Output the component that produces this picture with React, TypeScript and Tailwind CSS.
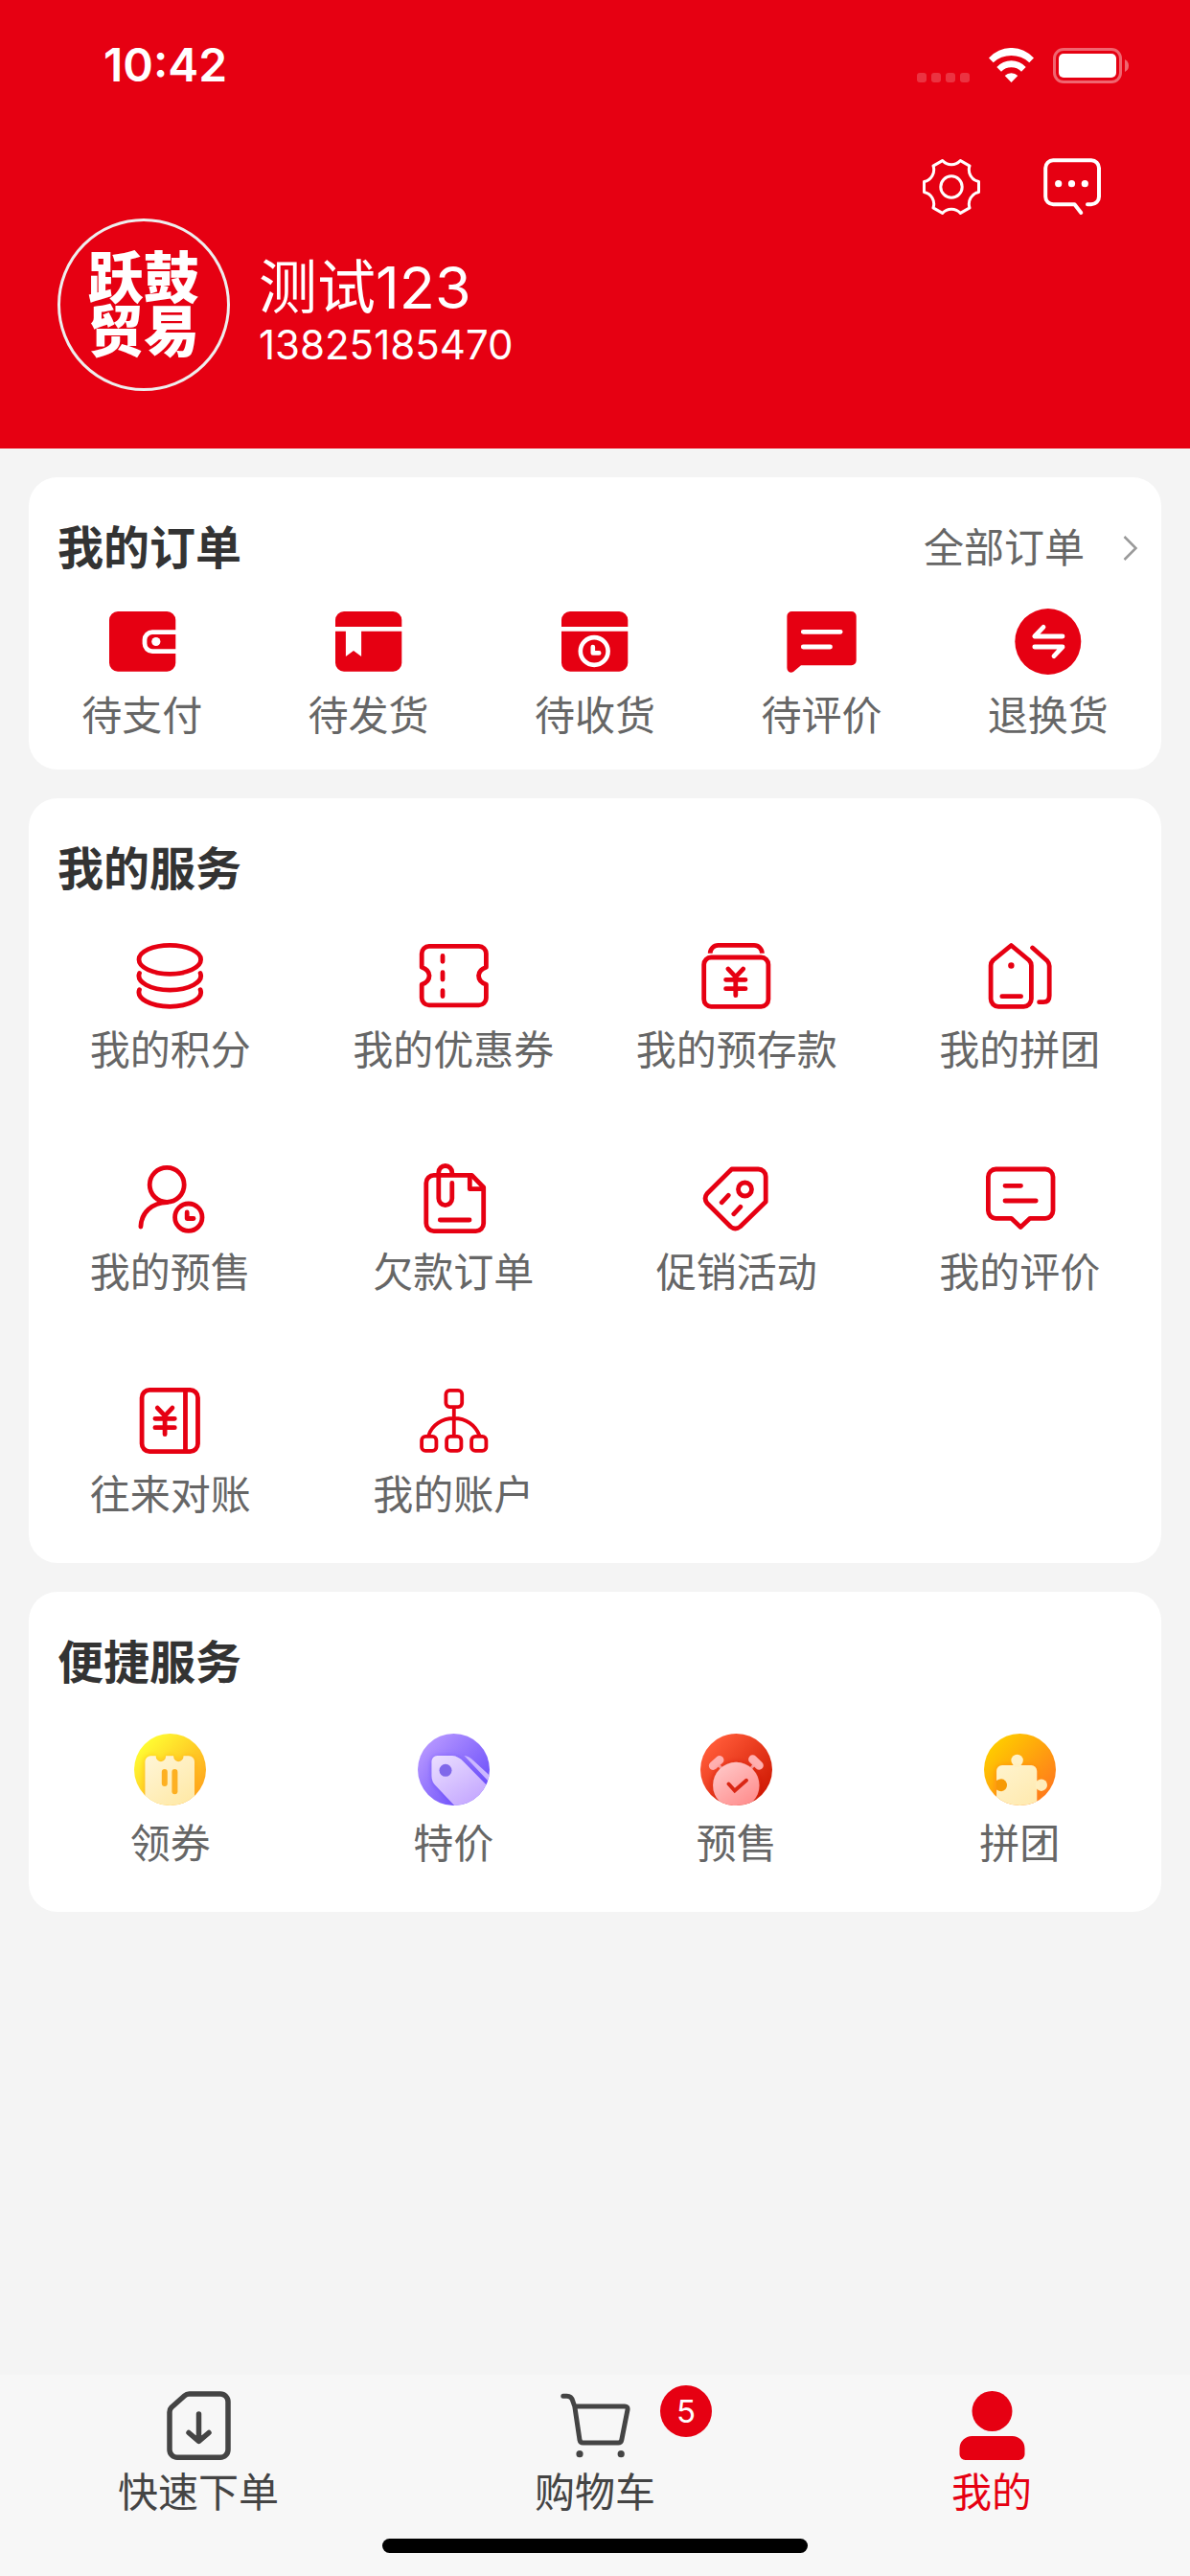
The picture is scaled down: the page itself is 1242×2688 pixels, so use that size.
import React from 'react';

const RED = '#e60012';

interface Entry {
    label: string;
    icon: React.ReactNode;
}

/* ---------- icon wrappers ---------- */

const SolidIcon: React.FC<{ children: React.ReactNode }> = ({ children }) => (
    <svg className="w-[75px] h-[75px]" viewBox="0 0 75 75" fill={RED} aria-hidden="true">
        {children}
    </svg>
);

const LineIcon: React.FC<{ children: React.ReactNode; width?: number; color?: string }> = ({
    children,
    width = 4.8,
    color = RED,
}) => (
    <svg
        className="w-[75px] h-[75px]"
        viewBox="0 0 75 75"
        fill="none"
        stroke={color}
        strokeWidth={width}
        strokeLinecap="round"
        strokeLinejoin="round"
        aria-hidden="true"
    >
        {children}
    </svg>
);

const Yuan: React.FC<{ x: number; y: number }> = ({ x, y }) => (
    <g transform={`translate(${x} ${y})`}>
        <path d="M-7.8 -10.6L0 -2.4L7.8 -10.6M0 -2.4V17M-10.2 0.6H10.2M-10.2 10H10.2" />
    </g>
);

/* ---------- data ---------- */

const orders: Entry[] = [
    {
        label: '待支付',
        icon: (
            <SolidIcon>
                <rect x="3" y="6" width="69.3" height="62.7" rx="9" />
                <path d="M73 27.6H48a8 8 0 0 0-8 8v4a8 8 0 0 0 8 8H73" fill="none" stroke="#fff" strokeWidth="4.8" />
                <circle cx="51.8" cy="37.5" r="4.6" fill="#fff" />
            </SolidIcon>
        ),
    },
    {
        label: '待发货',
        icon: (
            <SolidIcon>
                <rect x="3" y="6" width="69.3" height="62.7" rx="9" />
                <path d="M2 22H74V26.7H30.1V53L22 47L13.9 53V26.7H2Z" fill="#fff" />
            </SolidIcon>
        ),
    },
    {
        label: '待收货',
        icon: (
            <SolidIcon>
                <rect x="3" y="6" width="69.3" height="62.7" rx="9" />
                <path d="M2 22H74V26.7H2Z" fill="#fff" />
                <g fill="none" stroke="#fff" strokeWidth="4.6" strokeLinecap="round" strokeLinejoin="round">
                    <circle cx="37.2" cy="47.5" r="14.4" />
                    <path d="M35.8 43V49.4H42.2" />
                </g>
            </SolidIcon>
        ),
    },
    {
        label: '待评价',
        icon: (
            <SolidIcon>
                <path d="M6.4 6H68.7a5 5 0 0 1 5 5V57.3a5 5 0 0 1-5 5H16L8 69Q5.6 70.6 3.2 69Q1.4 67.6 1.4 65V11a5 5 0 0 1 5-5Z" />
                <path d="M18.3 27.3H57.2M18.3 43H46.5" stroke="#fff" strokeWidth="4.8" strokeLinecap="round" />
            </SolidIcon>
        ),
    },
    {
        label: '退换货',
        icon: (
            <SolidIcon>
                <circle cx="37.8" cy="37.5" r="34.5" />
                <path
                    d="M33 22.3L23.8 32H53M23.8 43H53L44 52.7"
                    fill="none"
                    stroke="#fff"
                    strokeWidth="4.8"
                    strokeLinecap="round"
                    strokeLinejoin="round"
                />
            </SolidIcon>
        ),
    },
];

const services: Entry[] = [
    {
        label: '我的积分',
        icon: (
            <LineIcon>
                <ellipse cx="37.3" cy="20.3" rx="32.3" ry="15" />
                <path d="M5.5 34.5A32.3 15 0 1 0 69.1 34.5M5.5 51.7A32.3 15 0 1 0 69.1 51.7" />
            </LineIcon>
        ),
    },
    {
        label: '我的优惠券',
        icon: (
            <LineIcon>
                <path
                    strokeLinecap="butt"
                    d="M4.2 28.3V14a7.6 7.6 0 0 1 7.6-7.6H63.8a7.6 7.6 0 0 1 7.6 7.6V28.3Q63.6 31 63.6 37.3T71.4 46.3V60.3a7.6 7.6 0 0 1-7.6 7.6H11.8a7.6 7.6 0 0 1-7.6-7.6V46.3Q12 43.6 12 37.3T4.2 28.3Z"
                />
                <path d="M26 16.4V22.3M26 33.7V41M26 52.7V58.6" />
            </LineIcon>
        ),
    },
    {
        label: '我的预存款',
        icon: (
            <LineIcon>
                <rect x="3.7" y="18" width="67.2" height="51.3" rx="7.5" />
                <path strokeLinecap="butt" d="M10.2 13.7a8.3 8.3 0 0 1 8.3-8.3H56.1a8.3 8.3 0 0 1 8.3 8.3" />
                <Yuan x={36.8} y={40.7} />
            </LineIcon>
        ),
    },
    {
        label: '我的拼团',
        icon: (
            <LineIcon>
                <path d="M28.4 5.5L9.5 21Q7.1 23.5 7.1 26.5V61.3a8 8 0 0 0 8 8H41.4a8 8 0 0 0 8-8V26.5Q49.4 23.5 47 21Z" />
                <path d="M50.6 8L65.9 21.5Q68.2 24 68.2 27V58Q68.2 64.7 62 64.7H57.6M18.8 58.7H38.6" />
                <circle cx="28.4" cy="26.5" r="3.2" fill={RED} stroke="none" />
            </LineIcon>
        ),
    },
    {
        label: '我的预售',
        icon: (
            <LineIcon>
                <circle cx="34.2" cy="23.3" r="18" />
                <circle cx="56.8" cy="57.2" r="14.2" />
                <path d="M6.9 67C7.5 52 19 42 34.2 41.6M55.2 52V58.5H62" />
            </LineIcon>
        ),
    },
    {
        label: '欠款订单',
        icon: (
            <LineIcon>
                <path d="M16.8 13.4H56.5L68.7 26V63.6a8 8 0 0 1-8 8H16.8a8 8 0 0 1-8-8V21.4a8 8 0 0 1 8-8Z" />
                <path d="M54.3 14V27.7H68M35.8 12.5V10.5a7 7 0 0 0-14 0V37.6a7 7 0 0 0 14 0V21.5M23.3 60H54" />
            </LineIcon>
        ),
    },
    {
        label: '促销活动',
        icon: (
            <LineIcon>
                <path d="M32.7 7H60.5a7.7 7.7 0 0 1 7.7 7.7V41L41.5 67Q36.5 71 31.5 67L7 42.5Q3.2 37.5 7 32.5Z" />
                <circle cx="46.5" cy="28" r="7" />
                <path d="M22.2 41.8L29.2 34.3M34.8 53.8L41.8 46.3" />
            </LineIcon>
        ),
    },
    {
        label: '我的评价',
        icon: (
            <LineIcon>
                <path d="M12.4 7H64a8 8 0 0 1 8 8V50.3a8 8 0 0 1-8 8H48L38.2 67.5L28.5 58.3H12.4a8 8 0 0 1-8-8V15a8 8 0 0 1 8-8Z" />
                <path d="M22 24.3H38.5M22 40H54.2" />
            </LineIcon>
        ),
    },
    {
        label: '往来对账',
        icon: (
            <LineIcon>
                <rect x="8.1" y="5.4" width="58.4" height="64.2" rx="8" />
                <path d="M53.5 6V69" />
                <Yuan x={32.1} y={34.7} />
            </LineIcon>
        ),
    },
    {
        label: '我的账户',
        icon: (
            <LineIcon width={3.8}>
                <rect x="29.4" y="5.9" width="16.8" height="17.2" rx="4" />
                <path d="M37.8 24V52M11.4 52.5C15 42 25 35 37.8 35S60 42 64.2 52.5" />
                <rect x="4.1" y="53.9" width="15.3" height="15" rx="4" />
                <rect x="30.1" y="53.9" width="15.3" height="15" rx="4" />
                <rect x="56.1" y="53.9" width="15.3" height="15" rx="4" />
            </LineIcon>
        ),
    },
];

// Each round icon clips its artwork to the disc
const DiscIcon: React.FC<{ id: string; from: string; to: string; artFrom: string; artTo: string; children: React.ReactNode }> = ({
    id,
    from,
    to,
    artFrom,
    artTo,
    children,
}) => (
    <svg className="w-[75px] h-[75px]" viewBox="0 0 75 75" aria-hidden="true">
        <defs>
            <linearGradient id={`${id}-bg`} x1="0.15" y1="0.15" x2="0.9" y2="0.85">
                <stop offset="0" stopColor={from} />
                <stop offset="1" stopColor={to} />
            </linearGradient>
            <linearGradient id={`${id}-art`} x1="0.1" y1="0" x2="0.8" y2="1">
                <stop offset="0" stopColor={artFrom} />
                <stop offset="1" stopColor={artTo} />
            </linearGradient>
            <filter id={`${id}-shadow`} x="-30%" y="-30%" width="160%" height="160%">
                <feDropShadow dx="0" dy="1" stdDeviation="3" floodColor={to} floodOpacity="0.8" />
            </filter>
            <clipPath id={`${id}-clip`}>
                <circle cx="37.5" cy="37.5" r="37.5" />
            </clipPath>
        </defs>
        <g clipPath={`url(#${id}-clip)`}>
            <rect width="75" height="75" fill={`url(#${id}-bg)`} />
            {children}
        </g>
    </svg>
);

const shortcuts: Entry[] = [
    {
        label: '领券',
        icon: (
            <DiscIcon id="coupon" from="#fffb32" to="#ffa41c" artFrom="#fff5d6" artTo="#ffe9a6">
                <path
                    filter="url(#coupon-shadow)"
                    fill="url(#coupon-art)"
                    d="M17.5 23.3H22.6a5.3 6 0 0 0 10.6 0H41a5.3 6 0 0 0 10.6 0H57a6 6 0 0 1 6 6V76H11.5V29.3a6 6 0 0 1 6-6Z"
                />
                <rect x="28.8" y="37" width="6" height="18" rx="3" fill="#fdb022" />
                <rect x="39.4" y="37" width="6" height="26.3" rx="3" fill="#fdb022" />
            </DiscIcon>
        ),
    },
    {
        label: '特价',
        icon: (
            <DiscIcon id="special" from="#b394ff" to="#6a4dfa" artFrom="#e9dcff" artTo="#bfa0ff">
                <path fill="#cdb9ff" d="M48.5 23Q53.5 23.5 58 28L77 45.5L74 50Z" />
                <path
                    filter="url(#special-shadow)"
                    fill="url(#special-art)"
                    d="M20.5 23H36Q42.5 23.5 48 29.5L77 59V80H43L18.5 54Q14.5 50 14.5 44V29a6 6 0 0 1 6-6Z"
                />
                <circle cx="29" cy="38.3" r="6.5" fill="#8068ea" />
            </DiscIcon>
        ),
    },
    {
        label: '预售',
        icon: (
            <DiscIcon id="presale" from="#ff5a37" to="#d01a04" artFrom="#ffcaca" artTo="#ff8a8a">
                <g stroke="#ffb0b0" strokeLinecap="round">
                    <path strokeWidth="9" d="M13.3 33.5L20 27.5M54.6 26.8L61.3 33.2" />
                    <path strokeWidth="3" d="M17 31L23 37M57.5 31L52 37" />
                </g>
                <circle cx="37.3" cy="54" r="24.2" filter="url(#presale-shadow)" fill="url(#presale-art)" />
                <path
                    d="M29.5 52.5L35.8 59.5L48 48.8"
                    fill="none"
                    stroke="#d92614"
                    strokeWidth="3.8"
                    strokeLinecap="round"
                />
            </DiscIcon>
        ),
    },
    {
        label: '拼团',
        icon: (
            <DiscIcon id="group" from="#ffca00" to="#ff7a1c" artFrom="#fff3cc" artTo="#ffeab0">
                <g filter="url(#group-shadow)" fill="url(#group-art)">
                    <path d="M19 33H49.2a6 6 0 0 1 6 6V76H13.1V39a6 6 0 0 1 6-6Z" />
                </g>
                <circle cx="34.6" cy="28" r="6.2" fill="#fff1c6" />
                <circle cx="59.8" cy="53.7" r="6.2" fill="#ffedba" />
                <path d="M31.5 31H37.7V35H31.5ZM54 50.5H58V57H54Z" fill="#ffefc0" />
                <path d="M13 49Q19 45.5 22.5 49.5Q25.5 53.7 22.5 58Q19 62 13 58.5Z" fill="#f79a06" />
            </DiscIcon>
        ),
    },
];

/* ---------- building blocks ---------- */

const Card: React.FC<{ title: string; extra?: React.ReactNode; children: React.ReactNode }> = ({ title, extra, children }) => (
    <section className="bg-white rounded-[30px] pt-10">
        <div className="flex items-center justify-between pl-[30px] pr-6 leading-[68px]">
            <h2 className="text-[48px] font-bold text-[#333333]">{title}</h2>
            {extra}
        </div>
        {children}
    </section>
);

const EntryLink: React.FC<{ entry: Entry }> = ({ entry }) => (
    <a href="#" className="flex flex-col items-center gap-[10px] text-[42px] leading-[60px] text-[#666666]">
        {entry.icon}
        <span className="whitespace-nowrap">{entry.label}</span>
    </a>
);

const StatusBar: React.FC = () => (
    <div className="flex items-center justify-between h-[132px] pt-1 pl-[108px] pr-16">
        <span className="text-[48px] leading-[56px] font-semibold">10:42</span>
        <div className="flex items-end gap-5">
            <svg className="w-[55px] h-[37px]" viewBox="0 0 55 37" fill="#fff" fillOpacity="0.2" aria-hidden="true">
                <rect x="0" y="26" width="10" height="10" rx="3" />
                <rect x="15" y="26" width="10" height="10" rx="3" />
                <rect x="30" y="26" width="10" height="10" rx="3" />
                <rect x="45" y="26" width="10" height="10" rx="3" />
            </svg>
            <svg className="w-[47px] h-[37px]" viewBox="0 0 47 37" fill="#fff" aria-hidden="true">
                <path d="M0 10.5A31.5 31.5 0 0 1 47 10.5L42.3 15.3A27.8 27.8 0 0 0 4.7 15.3Z" />
                <path d="M8.3 20A20.5 20.5 0 0 1 38.7 20L34 24.7A14.7 14.7 0 0 0 13 24.7Z" />
                <path d="M16.7 29A9.5 9.5 0 0 1 30.3 29L23.5 36Z" />
            </svg>
            <svg className="w-[79px] h-[37px]" viewBox="0 0 79 37" fill="#fff" aria-hidden="true">
                <rect x="1.5" y="1.5" width="69" height="34" rx="9.5" fill="none" stroke="#fff" strokeOpacity="0.4" strokeWidth="3" />
                <rect x="6" y="6" width="60" height="25" rx="5" />
                <path d="M75 12Q79 14 79 18.5T75 25Z" fillOpacity="0.4" />
            </svg>
        </div>
    </div>
);

const Header: React.FC = () => (
    <header className="bg-[#e60012] text-white pb-[60px]">
        <StatusBar />
        <div className="flex justify-end gap-[66px] pt-[33px] pr-[93px]">
            <button type="button" aria-label="设置">
                <svg className="w-[60px] h-[60px]" viewBox="0 0 60 60" fill="none" stroke="#fff" strokeWidth="3" strokeLinejoin="round">
                    <path d="M20.6 2.6A12.6 12.6 0 0 0 39.4 2.6L49 8.1A12.6 12.6 0 0 0 58.5 24.5V35.5A12.6 12.6 0 0 0 49 51.9L39.4 57.4A12.6 12.6 0 0 0 20.6 57.4L11 51.9A12.6 12.6 0 0 0 1.5 35.5V24.5A12.6 12.6 0 0 0 11 8.1Z" />
                    <circle cx="30" cy="30" r="11.2" />
                </svg>
            </button>
            <button type="button" aria-label="消息">
                <svg className="w-[60px] h-[60px]" viewBox="0 0 60 60" fill="none" stroke="#fff" strokeWidth="4" strokeLinecap="round" strokeLinejoin="round">
                    <path d="M46 48.3H50a8 8 0 0 0 8-8V10.2a8 8 0 0 0-8-8H10.2a8 8 0 0 0-8 8V40.3a8 8 0 0 0 8 8H32.5L39.3 57" />
                    <g fill="#fff" stroke="none">
                        <circle cx="15.7" cy="26.7" r="3.6" />
                        <circle cx="29.5" cy="26.7" r="3.6" />
                        <circle cx="43.3" cy="26.7" r="3.6" />
                    </g>
                </svg>
            </button>
        </div>
        <div className="flex items-end gap-[30px] pl-[60px] pt-[3px]">
            <div className="flex items-center justify-center w-[180px] h-[180px] rounded-full border-[3px] border-[#eeeeee]">
                <p className="w-[116px] text-[58px] leading-[56px] font-black">跃鼓贸易</p>
            </div>
            <div className="pb-6">
                <h1 className="text-[61px] leading-[72px]">测试123</h1>
                <p className="text-[42px] leading-[48px]">13825185470</p>
            </div>
        </div>
    </header>
);

const TabBar: React.FC = () => (
    <nav className="sticky bottom-0 bg-[#f7f7f7] pt-[15px] pb-6">
        <div className="grid grid-cols-3 text-[42px] leading-[66px] text-[#444444]">
            <a href="#" className="flex flex-col items-center">
                <LineIcon width={5.5} color="#444444">
                    <path d="M27.5 5H60a8 8 0 0 1 8 8V63.2a8 8 0 0 1-8 8H15a8 8 0 0 1-8-8V24Q7 21 9 19L22.5 7Q24.7 5 27.5 5Z" />
                    <path d="M37.5 26V54M27 45.5L37.5 54.5L48 45.5" />
                </LineIcon>
                <span>快速下单</span>
            </a>
            <a href="#" className="relative flex flex-col items-center">
                <LineIcon width={5} color="#444444">
                    <path d="M3.8 7.3H7.5Q12.5 7.3 13.8 12.5L15.8 18H68Q71.5 18 71 21.5L64.8 53Q64.2 56 61.2 56H24.5Q21.6 56 21 53L15.8 18" />
                    <circle cx="21" cy="67.7" r="3.6" fill="#444444" stroke="none" />
                    <circle cx="64.2" cy="67.7" r="3.6" fill="#444444" stroke="none" />
                </LineIcon>
                <span>购物车</span>
                <span className="absolute left-1/2 -top-1 ml-[68px] w-[54px] h-[54px] rounded-full bg-[#e60012] text-white text-[33px] leading-[54px] text-center">
                    5
                </span>
            </a>
            <a href="#" aria-current="page" className="flex flex-col items-center text-[#e60012]">
                <SolidIcon>
                    <circle cx="37.5" cy="23" r="21" />
                    <path d="M16.5 49H58.5a13 13 0 0 1 13 13V68a6 6 0 0 1-6 6H9.5a6 6 0 0 1-6-6V62a13 13 0 0 1 13-13Z" />
                </SolidIcon>
                <span>我的</span>
            </a>
        </div>
        <div className="mx-auto mt-[15px] w-[444px] h-[15px] rounded-full bg-black" />
    </nav>
);

export default function App() {
    return (
        <div className="flex flex-col min-h-screen bg-[#f4f4f4] font-['Inter','Noto_Sans_CJK_SC',sans-serif]" lang="zh-CN">
            <Header />
            <main className="flex-1 flex flex-col gap-[30px] p-[30px]">
                <Card
                    title="我的订单"
                    extra={
                        <a href="#" className="flex items-center gap-10 text-[42px] text-[#666666]">
                            全部订单
                            <svg className="w-4 h-[26px]" viewBox="0 0 16 26" fill="none" stroke="#999999" strokeWidth="2.5" aria-hidden="true">
                                <path d="M1.5 1L13.5 13L1.5 25" />
                            </svg>
                        </a>
                    }
                >
                    <div className="grid grid-cols-5 py-[26px]">
                        {orders.map(entry => (
                            <EntryLink key={entry.label} entry={entry} />
                        ))}
                    </div>
                </Card>

                <Card title="我的服务">
                    <div className="grid grid-cols-4 gap-y-[87px] pt-10 pb-[41px]">
                        {services.map(entry => (
                            <EntryLink key={entry.label} entry={entry} />
                        ))}
                    </div>
                </Card>

                <Card title="便捷服务">
                    <div className="grid grid-cols-4 pt-10 pb-[41px]">
                        {shortcuts.map(entry => (
                            <EntryLink key={entry.label} entry={entry} />
                        ))}
                    </div>
                </Card>
            </main>
            <TabBar />
        </div>
    );
}
